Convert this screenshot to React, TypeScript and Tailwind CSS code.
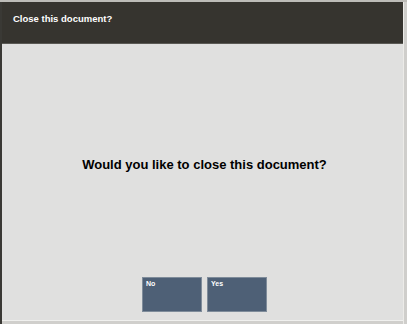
export default function App() {
  return (
    <div className="w-[407px] h-[324px] bg-[#d4d4d2] flex flex-col" style={{ fontFamily: '"Liberation Sans", Arial, sans-serif' }}>
      <div className="h-[2px] bg-[#bdbcb8]" />
      <div className="flex flex-1 min-h-0">
        <div className="w-[2px] bg-[#3a3935]" />
        <div className="flex-1 flex flex-col">
          <div className="h-[42px] bg-[#36342f] border-b border-[#5a5954] flex items-center pl-[11px] pb-[6px]">
            <span className="text-white font-bold text-[9.5px]">Close this document?</span>
          </div>
          <div className="flex-1 bg-[#e0e0df] flex flex-col items-center">
            <div className="mt-[111px] pl-[4px] text-black font-bold text-[13px]">Would you like to close this document?</div>
            <div className="mt-auto mb-[8px] flex gap-[5px] pl-[4px]">
              <div className="w-[60px] h-[35px] bg-[#4e6076] border border-[#7f8c9a] text-white font-bold text-[7px] pl-[3px] pt-[1px]">No</div>
              <div className="w-[60px] h-[35px] bg-[#4e6076] border border-[#7f8c9a] text-white font-bold text-[7px] pl-[3px] pt-[1px]">Yes</div>
            </div>
          </div>
          <div className="h-[4px] bg-[#d0cfcc] border-t border-[#f0f0ee]" />
        </div>
        <div className="w-[4px] bg-[#cfcecb] border-l border-[#ecebe8]" />
      </div>
    </div>
  );
}
